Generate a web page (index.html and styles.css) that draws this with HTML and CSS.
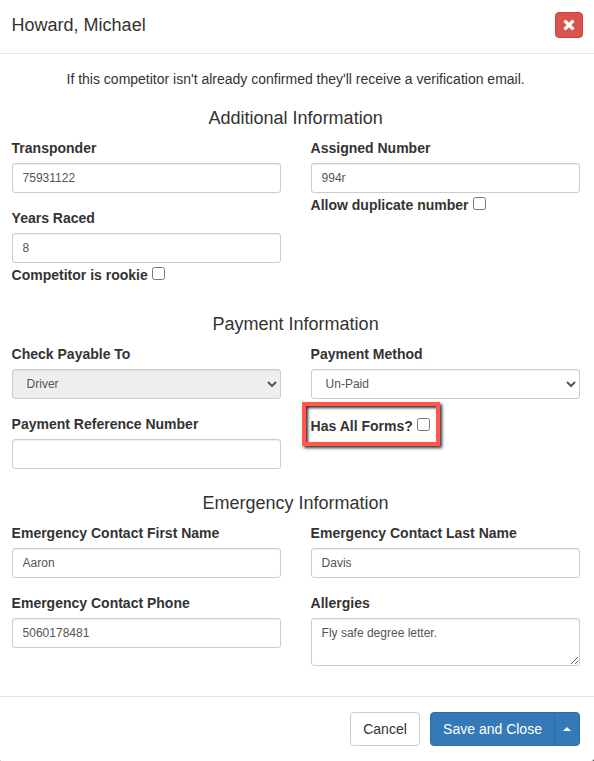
FILE: index.html
```html
<!DOCTYPE html>
<html lang="en">
<head>
    <meta charset="utf-8">
    <title>Edit Competitor</title>
    <link rel="stylesheet" href="styles.css">
</head>
<body>
    <div class="modal">
        <div class="modal-header">
            <h4 class="modal-title">Howard, Michael</h4>
            <button class="btn-close" type="button" aria-label="Close">
                <svg width="12" height="12" viewBox="0 0 12 12"><path d="M2.6 0.6 L6 3.6 L9.4 0.6 L11.6 2.8 L8.4 6 L11.6 9.2 L9.4 11.4 L6 8.4 L2.6 11.4 L0.4 9.2 L3.6 6 L0.4 2.8 Z" fill="#fff"/></svg>
            </button>
        </div>

        <form class="modal-body">
            <p class="notice">If this competitor isn't already confirmed they'll receive a verification email.</p>

            <h4 class="section-title">Additional Information</h4>
            <div class="row additional">
                <div class="col">
                    <div class="form-group">
                        <label for="transponder">Transponder</label>
                        <input class="form-control" type="text" id="transponder" value="75931122">
                    </div>
                    <div class="form-group">
                        <label for="yearsRaced">Years Raced</label>
                        <input class="form-control" type="text" id="yearsRaced" value="8">
                        <div class="check-line">
                            <label for="rookie">Competitor is rookie</label>
                            <input type="checkbox" id="rookie">
                        </div>
                    </div>
                </div>
                <div class="col">
                    <div class="form-group">
                        <label for="assignedNumber">Assigned Number</label>
                        <input class="form-control" type="text" id="assignedNumber" value="994r">
                        <div class="check-line">
                            <label for="duplicate">Allow duplicate number</label>
                            <input type="checkbox" id="duplicate">
                        </div>
                    </div>
                </div>
            </div>

            <h4 class="section-title">Payment Information</h4>
            <div class="row payment">
                <div class="col">
                    <div class="form-group">
                        <label for="payableTo">Check Payable To</label>
                        <select class="form-control" id="payableTo" disabled>
                            <option>Driver</option>
                        </select>
                    </div>
                    <div class="form-group">
                        <label for="reference">Payment Reference Number</label>
                        <input class="form-control" type="text" id="reference">
                    </div>
                </div>
                <div class="col">
                    <div class="form-group">
                        <label for="method">Payment Method</label>
                        <select class="form-control" id="method">
                            <option>Un-Paid</option>
                        </select>
                    </div>
                    <div class="highlight">
                        <div class="check-line">
                            <label for="hasForms">Has All Forms?</label>
                            <input type="checkbox" id="hasForms">
                        </div>
                    </div>
                </div>
            </div>

            <h4 class="section-title">Emergency Information</h4>
            <div class="row">
                <div class="col">
                    <div class="form-group">
                        <label for="firstName">Emergency Contact First Name</label>
                        <input class="form-control" type="text" id="firstName" value="Aaron">
                    </div>
                    <div class="form-group">
                        <label for="phone">Emergency Contact Phone</label>
                        <input class="form-control" type="text" id="phone" value="5060178481">
                    </div>
                </div>
                <div class="col">
                    <div class="form-group">
                        <label for="lastName">Emergency Contact Last Name</label>
                        <input class="form-control" type="text" id="lastName" value="Davis">
                    </div>
                    <div class="form-group">
                        <label for="allergies">Allergies</label>
                        <textarea class="form-control" id="allergies">Fly safe degree letter.</textarea>
                    </div>
                </div>
            </div>
        </form>

        <div class="modal-footer">
            <button class="btn btn-default" type="button">Cancel</button>
            <div class="btn-group">
                <button class="btn btn-primary btn-save" type="button">Save and Close</button>
                <button class="btn btn-primary btn-caret" type="button" aria-label="More"><span class="caret"></span></button>
            </div>
        </div>
    </div>
</body>
</html>
```
FILE: styles.css
```css
* {
    box-sizing: border-box;
}

body {
    margin: 0;
    font-family: "Liberation Sans", Arial, sans-serif;
    font-size: 14px;
    line-height: 20px;
    color: #333;
    background-color: #555;
    overflow: hidden;
}

button, input, select, textarea {
    font-family: inherit;
}

.modal {
    height: 761px;
    background-color: #fff;
    border-radius: 0 0 3px 1px;
}

.modal-header {
    display: flex;
    justify-content: space-between;
    align-items: center;
    height: 54px;
    padding: 0 11px 3px 11.6px;
    border-bottom: 1px solid #e5e5e5;
}

.modal-title, .section-title {
    margin: 0;
    font-size: 18px;
    font-weight: normal;
    line-height: 20px;
}

.btn-close {
    display: flex;
    align-items: center;
    justify-content: center;
    width: 28px;
    height: 26px;
    padding: 0;
    background-color: #d9534f;
    border: 1px solid #d43f3a;
    border-radius: 4px;
}

.modal-body {
    height: 642px;
    padding: 15px 14.4px 0 11.6px;
}

.notice {
    margin: 0 0 19px;
    text-align: center;
}

.section-title {
    margin-bottom: 10px;
    text-align: center;
}

.row {
    display: grid;
    grid-template-columns: 1fr 1fr;
    column-gap: 30px;
}

.additional {
    height: 176px;
}

.payment {
    height: 149px;
}

.form-group {
    margin-bottom: 15px;
}

.form-group label {
    display: block;
    margin-bottom: 5px;
}

label {
    font-weight: bold;
}

.form-control {
    display: block;
    width: 100%;
    height: 30px;
    padding: 5px 10px;
    font-size: 12px;
    line-height: 18px;
    color: #555;
    background-color: #fff;
    border: 1px solid #ccc;
    border-radius: 3px;
    box-shadow: inset 0 1px 1px rgba(0, 0, 0, .075);
}

.form-control:disabled {
    background-color: #eee;
    opacity: 1;
}

textarea.form-control {
    height: 48px;
}

.check-line {
    display: flex;
    align-items: flex-start;
    gap: 4px;
    padding-top: 2px;
}

.form-group .check-line label {
    margin: 0;
}

.check-line input {
    width: 13px;
    height: 13px;
    margin: 2px 0 0;
}

/* red callout around the forms checkbox */
.highlight {
    width: 138px;
    height: 44px;
    margin: -12px 0 0 -8.6px;
    padding: 8px 0 0 4.6px;
    border: 4px solid #ff5a4d;
    box-shadow: 2px 2px 3px #333, inset 2px 2px 3px #333;
}

.modal-footer {
    display: flex;
    justify-content: flex-end;
    gap: 10px;
    padding: 15px 14px 0 0;
    border-top: 1px solid #e5e5e5;
}

.btn {
    height: 34px;
    padding: 0 12px;
    font-size: 14px;
    line-height: 20px;
    border: 1px solid #ccc;
    border-radius: 4px;
}

.btn-default {
    width: 70px;
    color: #333;
    background-color: #fff;
}

.btn-group {
    display: flex;
}

.btn-primary {
    color: #fff;
    background-color: #337ab7;
    border-color: #2e6da4;
}

.btn-save {
    width: 125px;
    border-radius: 4px 0 0 4px;
}

.btn-caret {
    width: 26px;
    margin-left: -1px;
    padding: 0 8px;
    border-radius: 0 4px 4px 0;
}

.caret {
    display: block;
    width: 0;
    height: 0;
    border-right: 4px solid transparent;
    border-bottom: 4px solid #fff;
    border-left: 4px solid transparent;
}
```
